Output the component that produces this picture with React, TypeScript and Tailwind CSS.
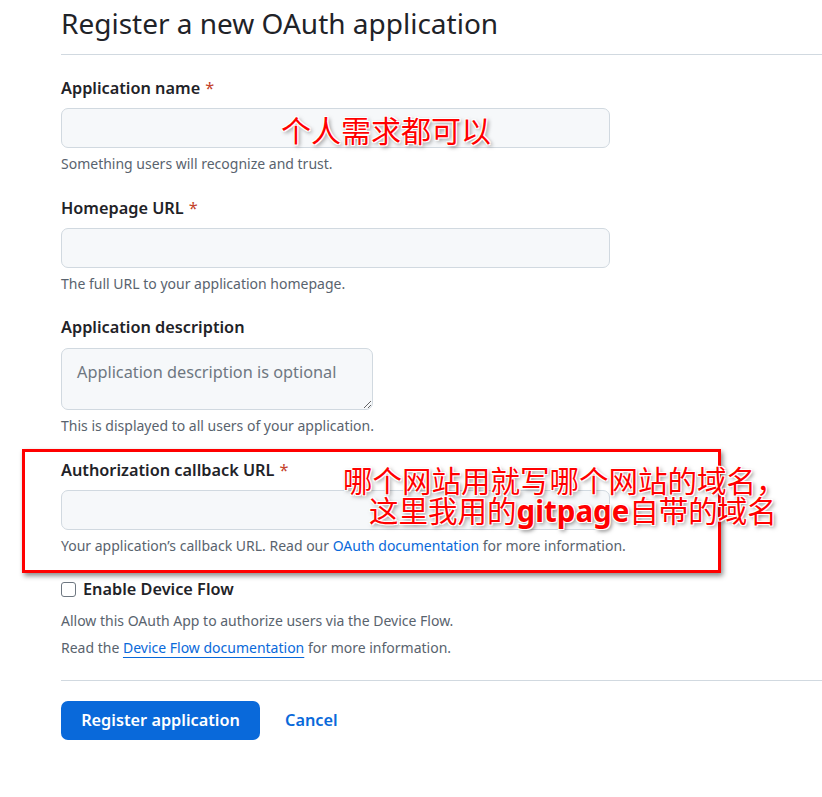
const font = "font-['Noto_Sans','Liberation_Sans',sans-serif]";

const Label = ({ text, required }: { text: string; required?: boolean }) => (
  <div className="h-[26px] text-[16.3px] leading-[26px] font-semibold text-[#1f2328]">
    {text}
    {required && <span className="ml-[5px] font-normal text-[#c4432b]">*</span>}
  </div>
);

const Note = ({ children }: { children: React.ReactNode }) => (
  <div className="mt-[6px] text-[14px] leading-[20px] text-[#59636e]">{children}</div>
);

const TextInput = () => (
  <div className="mt-[7px] h-[40px] w-[549px] rounded-[7px] border border-[#d1d9e0] bg-[#f6f8fa]" />
);

const annot =
  "font-['Noto_Sans_CJK_SC',sans-serif] text-[#ff0000] [text-shadow:0_0_2px_#fff,1px_1px_0_#fff,-1px_-1px_0_#fff,1px_-1px_0_#fff,-1px_1px_0_#fff,2px_2px_4px_rgba(0,0,0,0.55)]";

export default function App() {
  return (
    <div className={`relative min-h-[797px] w-[822px] overflow-hidden bg-white ${font}`}>
      <div className="pl-[61px]">
        <h1 className="border-b border-[#d1d9e0] pt-[4px] pb-[12px] text-[28px] leading-[38px] font-normal text-[#1f2328]">
          Register a new OAuth application
        </h1>

        <div className="pt-[20px]">
          <Label text="Application name" required />
          <TextInput />
          <Note>Something users will recognize and trust.</Note>
        </div>

        <div className="pt-[21px]">
          <Label text="Homepage URL" required />
          <TextInput />
          <Note>The full URL to your application homepage.</Note>
        </div>

        <div className="pt-[20px]">
          <Label text="Application description" />
          <textarea
            placeholder="Application description is optional"
            className="mt-[8px] block h-[62px] w-[312px] rounded-[7px] border border-[#d1d9e0] bg-[#f6f8fa] px-[15px] py-[10px] text-[16.3px] leading-[26px] text-[#1f2328] placeholder:text-[#6e7781] outline-none"
          />
          <Note>This is displayed to all users of your application.</Note>
        </div>

        <div className="pt-[21px]">
          <Label text="Authorization callback URL" required />
          <TextInput />
          <Note>
            Your application’s callback URL. Read our{" "}
            <span className="text-[#0969da]">OAuth documentation</span> for more information.
          </Note>
        </div>

        <div className="flex items-center pt-[20px]">
          <span className="mr-[7px] h-[15px] w-[15px] rounded-[3px] border border-[#6e7781] bg-white" />
          <span className="text-[16.3px] leading-[26px] font-semibold text-[#1f2328]">
            Enable Device Flow
          </span>
        </div>
        <div className="mt-[9px] text-[14px] leading-[20px] text-[#59636e]">
          Allow this OAuth App to authorize users via the Device Flow.
        </div>
        <div className="mt-[7px] border-b border-[#d1d9e0] pb-[22px] text-[14px] leading-[20px] text-[#59636e]">
          Read the{" "}
          <span className="text-[#0969da] underline underline-offset-[4px]">
            Device Flow documentation
          </span>{" "}
          for more information.
        </div>

        <div className="flex items-center pt-[20px]">
          <button className="h-[39px] w-[199px] rounded-[7px] bg-[#0969da] text-[16.3px] font-semibold text-white">
            Register application
          </button>
          <span className="ml-[25px] text-[16.3px] font-semibold text-[#0969da]">Cancel</span>
        </div>
      </div>

      {/* screenshot annotations */}
      <div className="absolute left-[22px] top-[449px] h-[124px] w-[699px] border-[3px] border-[#ff0000] shadow-[2px_3px_5px_rgba(0,0,0,0.45)]" />
      <div className={`absolute left-[281px] top-[111px] text-[30px] leading-[36px] ${annot}`}>
        个人需求都可以
      </div>
      <div className={`absolute left-[343px] top-[464px] text-[29.5px] leading-[30px] ${annot}`}>
        <div>哪个网站用就写哪个网站的域名，</div>
        <div className="pl-[26px]">
          这里我用的<span className="font-['Noto_Sans',sans-serif] font-bold">gitpage</span>自带的域名
        </div>
      </div>
    </div>
  );
}
